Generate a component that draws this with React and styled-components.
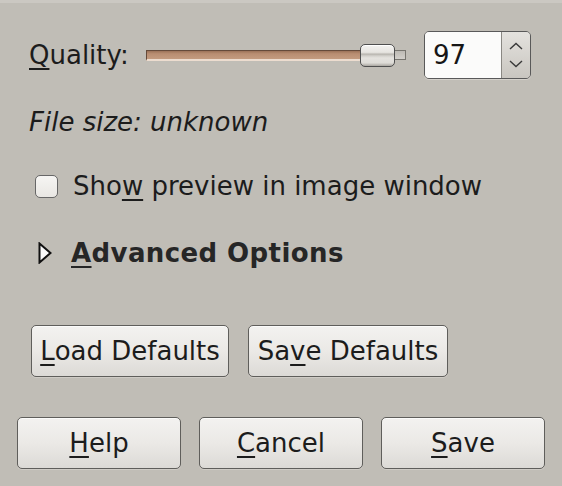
import React from "react";
import styled, { createGlobalStyle } from "styled-components";

const Global = createGlobalStyle`
  html, body { margin: 0; padding: 0; }
  body {
    width: 562px;
    height: 486px;
    overflow: hidden;
    background: #c0bdb6;
    font-family: "DejaVu Sans", "Liberation Sans", sans-serif;
    color: #1c1c1c;
  }
`;

const Dialog = styled.div`
  box-sizing: border-box;
  width: 562px;
  height: 486px;
  border-top: 3px solid #cbc8c2;
  padding: 28px 17px 0 17px;
  display: flex;
  flex-direction: column;
`;

const Options = styled.div`
  display: flex;
  flex-direction: column;
  padding-left: 12px;
`;

const Row = styled.div`
  display: flex;
  align-items: center;
  margin-top: ${(p) => p.$mt || 0}px;
`;

const Text = styled.span`
  font-size: 26px;
  line-height: 30px;
  font-style: ${(p) => (p.$italic ? "italic" : "normal")};
  font-weight: ${(p) => (p.$bold ? 700 : 400)};
  letter-spacing: ${(p) => (p.$bold ? "0.4px" : "0")};
  color: ${(p) => (p.$bold ? "#262626" : "#1c1c1c")};
  white-space: nowrap;
`;

const Mn = styled.span`
  text-decoration: underline;
  text-decoration-thickness: 2px;
  text-underline-offset: 4px;
`;

const QualityLabel = styled(Text)`
  width: 117px;
`;

const Slider = styled.div`
  width: 260px;
  height: 23px;
  display: flex;
  align-items: center;
`;

const TroughFill = styled.div`
  flex: 1;
  height: 11px;
  box-sizing: border-box;
  border: 1px solid #654a3a;
  border-bottom: 2px solid #ecdccf;
  border-right: none;
  background: linear-gradient(to bottom, #9c7258 0%, #b98e72 35%, #c39b7f 100%);
`;

const Thumb = styled.div`
  box-sizing: border-box;
  width: 35px;
  height: 23px;
  border: 1px solid #4f4f4f;
  border-radius: 5px;
  background: linear-gradient(
    to bottom,
    #f4f3f1 0%,
    #e6e4e0 35%,
    #b9b6b0 44%,
    #d3d1cc 52%,
    #e4e2de 62%,
    #dedcd7 85%,
    #a9a6a0 100%
  );
  box-shadow: inset 0 1px 0 #ffffff;
`;

const TroughRest = styled.div`
  width: 11px;
  height: 10px;
  box-sizing: border-box;
  border: 1px solid #77756f;
  border-left: none;
  background: linear-gradient(to bottom, #bdbab4, #d2cfca);
`;

const Spin = styled.div`
  margin-left: 18px;
  box-sizing: border-box;
  width: 107px;
  height: 48px;
  border: 1px solid #595959;
  border-radius: 5px;
  display: flex;
  overflow: hidden;
  box-shadow: 0 1px 0 #d4d1cb;
`;

const SpinEntry = styled.div`
  flex: 1;
  background: #fbfbfa;
  display: flex;
  align-items: center;
  padding-left: 8px;
  font-size: 26px;
  color: #161616;
`;

const SpinButtons = styled.div`
  width: 28px;
  border-left: 1px solid #8a8883;
  background: linear-gradient(to bottom, #e4e2de, #c9c6c0);
  display: flex;
  flex-direction: column;
  align-items: center;
  justify-content: center;
  gap: 10px;
`;

const CheckBox = styled.div`
  box-sizing: border-box;
  width: 23px;
  height: 23px;
  margin-left: 6px;
  margin-right: 15px;
  border: 1px solid #676767;
  border-radius: 5px;
  background: linear-gradient(to bottom, #f6f5f3, #e9e7e3);
`;

const Expander = styled.div`
  width: 14px;
  height: 22px;
  margin-left: 9px;
  margin-right: 19px;
  display: flex;
  align-items: center;
`;

const ButtonRow = styled.div`
  display: flex;
  gap: ${(p) => p.$gap}px;
  padding-left: ${(p) => p.$pl || 0}px;
  margin-top: ${(p) => p.$mt}px;
`;

const Button = styled.div`
  box-sizing: border-box;
  width: ${(p) => p.$w}px;
  height: 52px;
  border: 1px solid #5f5e5b;
  border-radius: 5px;
  background: linear-gradient(to bottom, #f3f2f0 0%, #ebe9e6 50%, #dcdad6 100%);
  box-shadow: inset 0 1px 0 #fbfbfa, 0 1px 0 #cfccc6;
  display: flex;
  align-items: center;
  justify-content: center;
  font-size: 26px;
  line-height: 30px;
  color: #1c1c1c;
  white-space: nowrap;
`;

const Chevron = ({ up }) => (
  <svg width="14" height="8" viewBox="0 0 14 8">
    <polyline
      points={up ? "1,7 7,1.5 13,7" : "1,1 7,6.5 13,1"}
      fill="none"
      stroke="#3a3a3a"
      strokeWidth="1.4"
    />
  </svg>
);

export default function App() {
  const value = 97;
  return (
    <>
      <Global />
      <Dialog>
        <Options>
          <Row $mt={0}>
            <QualityLabel>
              <Mn>Q</Mn>uality:
            </QualityLabel>
            <Slider>
              <TroughFill />
              <Thumb />
              <TroughRest />
            </Slider>
            <Spin>
              <SpinEntry>{value}</SpinEntry>
              <SpinButtons>
                <Chevron up />
                <Chevron />
              </SpinButtons>
            </Spin>
          </Row>
          <Row $mt={28}>
            <Text $italic>File size: unknown</Text>
          </Row>
          <Row $mt={34}>
            <CheckBox />
            <Text>
              Sho<Mn>w</Mn> preview in image window
            </Text>
          </Row>
          <Row $mt={37}>
            <Expander>
              <svg width="14" height="22" viewBox="0 0 14 22">
                <polygon
                  points="1.5,1.5 12.5,11 1.5,20.5"
                  fill="#fafafa"
                  stroke="#111"
                  strokeWidth="2"
                  strokeLinejoin="miter"
                />
              </svg>
            </Expander>
            <Text $bold>
              <Mn>A</Mn>dvanced Options
            </Text>
          </Row>
        </Options>
        <ButtonRow $gap={19} $pl={14} $mt={57}>
          <Button $w={198}>
            <Mn>L</Mn>oad Defaults
          </Button>
          <Button $w={200}>
            Sa<Mn>v</Mn>e Defaults
          </Button>
        </ButtonRow>
        <ButtonRow $gap={18} $mt={40}>
          <Button $w={164}>
            <Mn>H</Mn>elp
          </Button>
          <Button $w={164}>
            <Mn>C</Mn>ancel
          </Button>
          <Button $w={164}>
            <Mn>S</Mn>ave
          </Button>
        </ButtonRow>
      </Dialog>
    </>
  );
}
